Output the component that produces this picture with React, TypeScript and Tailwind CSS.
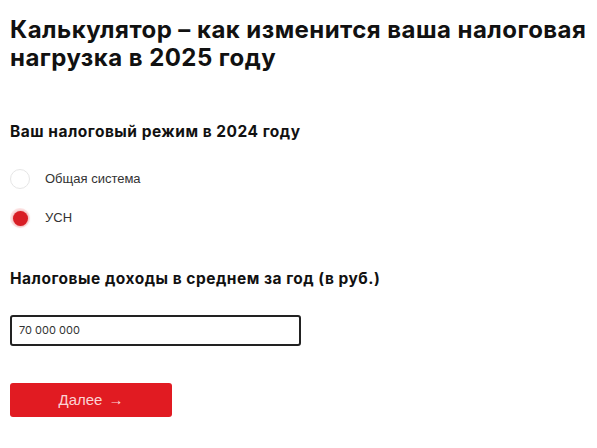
export default function App() {
  return (
    <div className="min-h-screen bg-white px-[10px] pt-[16px] text-[#111]" style={{ fontFamily: 'Inter, "Noto Sans", sans-serif' }}>
      <h1 className="whitespace-nowrap text-[24px] font-bold leading-[28px] tracking-[0.45px]">
        Калькулятор – как изменится ваша налоговая
        <br />
        нагрузка в 2025 году
      </h1>

      <h2 className="mt-[50px] text-[15.5px] font-bold leading-[20px] tracking-[0.5px]">Ваш налоговый режим в 2024 году</h2>

      <div className="mt-[27px] flex flex-col gap-[19px]">
        <label className="flex items-center gap-[15px]">
          <span className="h-[20px] w-[20px] rounded-full border border-[#e6e6e6] bg-white" />
          <span className="text-[13px] leading-[20px] text-[#333]" style={{ fontFamily: '"Liberation Sans", Arial, sans-serif' }}>
            Общая система
          </span>
        </label>
        <label className="flex items-center gap-[15px]">
          <span className="flex h-[20px] w-[20px] items-center justify-center rounded-full bg-[#fde8e8]">
            <span className="h-[15px] w-[15px] rounded-full bg-[#d81e25] shadow-[0_0_3px_rgba(216,30,37,0.5)]" />
          </span>
          <span className="text-[13px] leading-[20px] text-[#333]" style={{ fontFamily: '"Liberation Sans", Arial, sans-serif' }}>
            УСН
          </span>
        </label>
      </div>

      <h2 className="mt-[41px] text-[15.5px] font-bold leading-[20px] tracking-[0.5px]">Налоговые доходы в среднем за год (в руб.)</h2>

      <div className="mt-[26px] flex h-[31px] w-[291px] items-center rounded-[3px] border-2 border-[#222] px-[7px] text-[11px] text-[#333]">
        70 000 000
      </div>

      <button className="mt-[37px] flex h-[34px] w-[162px] items-center justify-center gap-[6px] rounded-[3px] bg-[#e11b22] text-[15px] text-[#fbd3d4]" style={{ fontFamily: '"Liberation Sans", Arial, sans-serif' }}>
        Далее <span>→</span>
      </button>
    </div>
  );
}
